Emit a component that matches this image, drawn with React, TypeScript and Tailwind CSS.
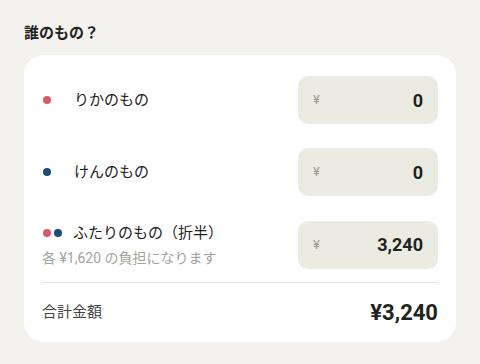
import React from "react";

const font = { fontFamily: 'Roboto, "Noto Sans CJK JP", sans-serif' };

function AmountBox({ value }: { value: string }) {
  return (
    <div className="flex h-[48px] w-[140px] items-center justify-between rounded-[10px] bg-[#ecebe2] pl-[15px] pr-[15px]">
      <span className="text-[13px] text-[#9a9a92]">¥</span>
      <span className="text-[18px] font-bold text-[#1c241e]">{value}</span>
    </div>
  );
}

function Dot({ color }: { color: string }) {
  return <span className={`inline-block h-[8px] w-[8px] rounded-full ${color}`} />;
}

export default function App() {
  return (
    <div className="min-h-[364px] w-[480px] bg-[#f3f2ee] px-[24px] pt-[22px]" style={font}>
      <h2 className="mb-[11px] text-[15px] font-bold leading-[22px] text-[#1f2420]">誰のもの？</h2>
      <div className="rounded-[20px] bg-white px-[18px] pb-[13px] pt-[21px]">
        <div className="flex flex-col gap-[24px]">
          <div className="flex items-center justify-between">
            <div className="flex items-center gap-[8px]">
              <div className="flex w-[24px] items-center pl-[1px]">
                <Dot color="bg-[#d95b6a]" />
              </div>
              <span className="text-[15px] text-[#222]">りかのもの</span>
            </div>
            <AmountBox value="0" />
          </div>
          <div className="flex items-center justify-between">
            <div className="flex items-center gap-[8px]">
              <div className="flex w-[24px] items-center pl-[1px]">
                <Dot color="bg-[#1c4a78]" />
              </div>
              <span className="text-[15px] text-[#222]">けんのもの</span>
            </div>
            <AmountBox value="0" />
          </div>
          <div className="flex items-center justify-between">
            <div className="flex flex-col pt-[1px]">
              <div className="flex items-center gap-[7px]">
                <div className="flex w-[24px] items-center gap-[3px] pl-[1px]">
                  <Dot color="bg-[#d95b6a]" />
                  <Dot color="bg-[#1c4a78]" />
                </div>
                <span className="text-[15px] leading-[24px] text-[#222]">ふたりのもの（折半）</span>
              </div>
              <span className="mt-[2px] text-[14px] leading-[22px] text-[#a3a39d]">各 ¥1,620 の負担になります</span>
            </div>
            <AmountBox value="3,240" />
          </div>
        </div>
        <div className="mt-[13px] h-px bg-[#e4e3de]" />
        <div className="flex items-center justify-between pt-[13px]">
          <span className="text-[15px] text-[#444]">合計金額</span>
          <span className="text-[22px] font-bold text-[#1c241e]">¥3,240</span>
        </div>
      </div>
    </div>
  );
}
